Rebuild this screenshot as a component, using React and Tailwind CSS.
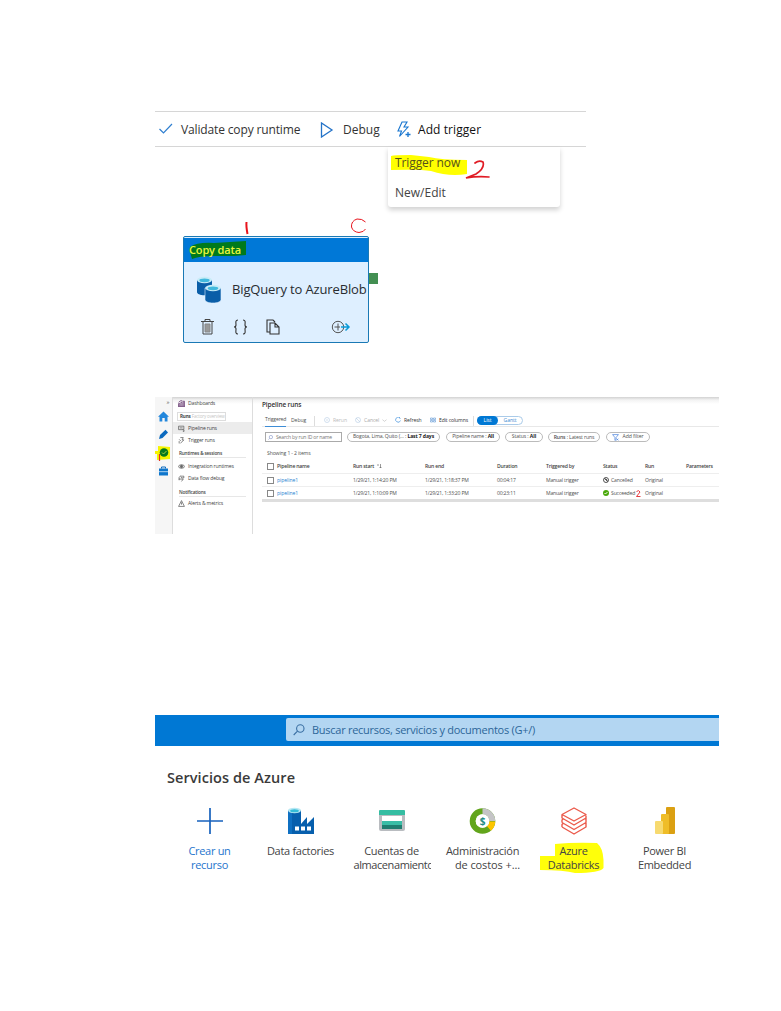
import React from "react";

const BlueCylinders = () => (
  <svg width="26" height="28" viewBox="0 0 26 28" className="shrink-0">
    <path d="M1 4v12c0 2 3 3.200 7.500 3.200S16 18 16 16V4z" fill="#0a5ea8" />
    <ellipse cx="8.500" cy="4" rx="7.500" ry="3.200" fill="#c9ecf7" />
    <ellipse cx="8.500" cy="4.300" rx="5.200" ry="1.900" fill="#41b9dd" />
    <path d="M9 12v11.500c0 2.200 3.500 3.500 8 3.500s8-1.300 8-3.500V12z" fill="#0a5ea8" stroke="#deefff" strokeWidth=".6" />
    <ellipse cx="17" cy="12" rx="7.800" ry="3.200" fill="#c9ecf7" />
    <ellipse cx="17" cy="12.300" rx="5.300" ry="1.900" fill="#41b9dd" />
  </svg>
);

function Toolbar() {
  return (
    <div className="relative flex h-[36px] w-[431px] items-center border-y border-[#d6d6d6] pt-[2px] text-[12px] text-[#333]">
      <svg width="15" height="12" viewBox="0 0 15 12" className="mb-[2px] ml-[4px]" fill="none" stroke="#2f7fd0" strokeWidth="1.200">
        <path d="M.5 6l4 4L13 1" />
      </svg>
      <span className="ml-[7px] w-[139px] whitespace-nowrap tracking-[-0.14px]">Validate copy runtime</span>
      <svg width="14" height="16" viewBox="0 0 14 16" className="mb-[1px]" fill="none" stroke="#2473c8" strokeWidth="1.300">
        <path d="M1.500 1v14L12 8z" />
      </svg>
      <span className="ml-[9px] w-[53px] whitespace-nowrap">Debug</span>
      <svg width="17" height="18" viewBox="0 0 17 18" className="mb-[1px]" fill="none" stroke="#1976cf" strokeWidth="1.100">
        <path d="M6 1h5L8 6h4l-8.500 9.500L5.500 10H2z" />
        <path d="M9.500 13.500h5M12 11v5" strokeWidth="1.300" />
      </svg>
      <span className="ml-[5px] whitespace-nowrap tracking-[0.08px] text-[#111]">Add trigger</span>
      <div className="absolute left-[233px] top-[35px] h-[60px] w-[172px] rounded-b-[3px] bg-white pl-[3px] pt-[5px] text-[#444] shadow-[0_3px_5px_rgba(0,0,0,0.18)]">
        <div className="relative h-[24px] w-[100px]">
          <svg width="78" height="24" viewBox="0 0 78 24" className="absolute left-0 top-[2px]">
            <path d="M0 2Q3 1 20 1L38 3Q50 6 76 6V20Q58 23 40 17Q28 15 0 16z" fill="#ff0" />
          </svg>
          <div className="absolute left-[4px] top-[4px] whitespace-nowrap leading-[14px] tracking-[-0.1px] text-[#55501c]">
            Trigger now
          </div>
          <svg width="26" height="22" viewBox="0 0 26 22" className="absolute left-[74px] top-[8px]" fill="none" stroke="#e01b24" strokeWidth="1.700" strokeLinecap="round">
            <path d="M10 3Q14 0 18 2Q20 8 11 14L1 18Q12 16 24 17" />
          </svg>
        </div>
        <div className="ml-[4px] mt-[8px] leading-[18px]">New/Edit</div>
      </div>
    </div>
  );
}

function ActivityCard() {
  return (
    <div className="relative ml-[28px] mt-[89px] h-[107px] w-[186px] rounded-[2px] border border-[#1a79b5] bg-[#deefff]">
      <div className="mt-[1px] flex h-[24px] items-center bg-[#0078d7]">
        <span className="relative text-[11px] font-semibold leading-[14px] text-[#e8f53c]">
          <svg width="58" height="19" viewBox="0 0 58 19" className="absolute left-[5px] top-[-3px]">
            <path d="M1 7Q8 2 25 3L57 1V15L45 16H24Q10 16 3 19L1 12z" fill="#007a1d" />
          </svg>
          <span className="relative ml-[5px] whitespace-nowrap tracking-[-0.15px]">Copy data</span>
        </span>
      </div>
      <div className="flex h-[53px] items-center overflow-hidden pl-[12px] pt-[2px]">
        <BlueCylinders />
        <span className="ml-[10px] whitespace-nowrap text-[13px] tracking-[-0.14px] text-[#282c30]">BigQuery to AzureBlob</span>
      </div>
      <div className="flex items-center pl-[17px] pr-[17px] pt-[4px]">
        <svg width="13" height="16" viewBox="0 0 13 16" fill="none" stroke="#444">
          <path d="M0 2.500h13M4 2.500V.5h5v2" />
          <path d="M2 3v12h9V3" />
          <path d="M4 5h5v8H4z" fill="#999" stroke="#888" />
        </svg>
        <svg width="15" height="16" viewBox="0 0 15 16" className="ml-[19px]" fill="none" stroke="#333" strokeWidth="1.100">
          <path d="M5 1C2 1 3 4 3 6S1.500 8 1 8c.5 0 2 0 2 2s-1 5 2 5M10 1c3 0 2 3 2 5s1.500 2 2 2c-.5 0-2 0-2 2s1 5-2 5" />
        </svg>
        <svg width="14" height="16" viewBox="0 0 14 16" className="ml-[18px]" fill="none" stroke="#333" strokeWidth="1.100">
          <path d="M4 13H1V1h6l2 2M4 4h5l4 4v7H4zM9 4v4h4" />
        </svg>
        <svg width="20" height="14" viewBox="0 0 20 14" className="ml-auto" fill="none" stroke="#555">
          <circle cx="7" cy="7" r="5.700" />
          <path d="M3.500 7H9M7 3.500v7" />
          <path d="M10 7h8M14.500 3.500L18 7l-3.500 3.500" stroke="#0a9ad8" strokeWidth="1.500" />
        </svg>
      </div>
      <div className="absolute left-[185px] top-[36px] h-[11px] w-[9px] bg-[#438f52]" />
      <svg width="130" height="20" viewBox="0 0 130 20" className="absolute left-[59px] top-[-20px]" fill="none" stroke="#e8131c">
        <path d="M3.500 5Q3 9 4.500 17" strokeWidth="2" />
        <path d="M122.500 5Q119 1.500 114 2Q108 4 108.500 10Q110 15 116 15.500Q121 15 122.500 12" />
      </svg>
    </div>
  );
}

const Stroke = ({ children, color = "#555", className = "", size = 7 }) => (
  <svg width={size} height={size} viewBox="0 0 12 12" fill="none" stroke={color} strokeWidth="1.200" className={"shrink-0 " + className}>
    {children}
  </svg>
);

function NavItem({ icon, label, active, className = "" }) {
  return (
    <div className={"flex h-[12px] items-center gap-[3px] whitespace-nowrap pl-[5px] pt-px " + (active ? "bg-[#ececec] " : "") + className}>
      {icon}
      <span>{label}</span>
    </div>
  );
}

const NavHeading = ({ children, className = "" }) => (
  <div className={"ml-[6px] mr-[6px] h-[9px] whitespace-nowrap border-b border-[#e7e7e7] text-[4.700px] font-semibold leading-[8px] tracking-[-0.18px] " + className}>{children}</div>
);

function Rail() {
  return (
    <div className="flex w-[18px] shrink-0 flex-col items-center border-r border-[#ddd] bg-[#f6f6f6]">
      <span className="ml-[9px] mt-[2px] h-[10px] text-[6px] leading-[6px] text-[#555]">»</span>
      <svg width="11" height="11" viewBox="0 0 11 11" className="mt-[2px]">
        <path d="M5.500.5L0 5.800h1.500V10.500H4.300V7h2.400v3.500h2.800V5.800H11z" fill="#2387dc" />
      </svg>
      <svg width="11" height="11" viewBox="0 0 11 11" className="mt-[7px]">
        <path d="M1 10l1-4L7.500.8 10 3.400 4.500 9z" fill="#0b6abf" />
      </svg>
      <div className="relative mt-[5px] h-[17px] w-[18px]">
        <svg width="19" height="18" viewBox="0 0 19 18" className="absolute left-0 top-0">
          <path d="M3 1l12 1v12L2 15V9H0V6h3z" fill="#f7f500" />
          <circle cx="9" cy="7.500" r="4.300" fill="#087820" />
          <path d="M7 7.500l1.500 1.500L11.500 6" fill="none" stroke="#a9d43c" />
          <path d="M4.500 9v7" stroke="#e53020" strokeWidth="1.200" />
        </svg>
      </div>
      <svg width="11" height="10" viewBox="0 0 11 10" className="mt-[4px]">
        <path d="M3.500 2.500V1h4v1.500" fill="none" stroke="#0b6abf" />
        <path d="M1 2.500h9V9.500H1z" fill="#0e76cc" />
        <path d="M1 5.700h9" stroke="#d9ecfa" strokeWidth=".8" />
      </svg>
    </div>
  );
}

function SideNav() {
  return (
    <div className="w-[80px] shrink-0 border-r border-[#ddd] text-[5.100px] tracking-[-0.16px] text-[#444]">
      <NavItem label="Dashboards" icon={<Stroke color="#775080"><path d="M1 11V6h2v5M5 11V4h2v7M9 11V2h2v9M0 11h12M1 4l4-3 3 1" strokeWidth="1.600" /></Stroke>} />
      <div className="ml-[4px] mt-[3px] flex h-[9px] w-[49px] items-center whitespace-nowrap border border-[#ddd] pl-[2px] text-[4.600px]">
        <b>Runs</b>
        <span className="ml-[1px] text-[4.500px] tracking-[-0.15px] text-[#c5c5c5]">Factory overview</span>
      </div>
      <NavItem active label="Pipeline runs" className="mt-[1px]" icon={<Stroke><path d="M1 2h9v6H1zM3 5h5M8 8l3 2-3 2" /></Stroke>} />
      <NavItem label="Trigger runs" icon={<Stroke><path d="M4 1h5L7 5h3L4 11M2 4l3 3M2 11V7" /></Stroke>} />
      <NavHeading className="mt-[3px]">Runtimes &amp; sessions</NavHeading>
      <NavItem label="Integration runtimes" className="mt-[2px]" icon={<Stroke><ellipse cx="6" cy="6" rx="5" ry="3" /><circle cx="6" cy="6" r="2" fill="#666" /></Stroke>} />
      <NavItem label="Data flow debug" icon={<Stroke><path d="M2 9V4l3-3 1 4h4V2H7M1 7h8L6 11" /></Stroke>} />
      <NavHeading className="mt-[4px]">Notifications</NavHeading>
      <NavItem label="Alerts &amp; metrics" icon={<Stroke><path d="M6 1L1 11h10zM6 4v4" /></Stroke>} />
    </div>
  );
}

const Pill = ({ className, children }) => (
  <div className={"flex h-[10px] shrink-0 items-center justify-center whitespace-pre rounded-full border border-[#bbb] " + className}>{children}</div>
);

const Box = () => <span className="mr-[3px] h-[7px] w-[7px] shrink-0 border border-[#888]" />;

const ROW = "grid grid-cols-[86px_72px_72px_49px_57px_42px_41px_34px] items-center whitespace-nowrap pl-[5px]";

function RunRow({ start, end, duration, ok, last }) {
  return (
    <div className={ROW + (last ? " h-[12px] pt-px" : " h-[13px] border-b border-[#eee] pt-px")}>
      <span className="flex items-center text-[#2b7fd1]"><Box />pipeline1</span>
      <span className="tracking-[-0.18px]">{start}</span>
      <span className="tracking-[-0.18px]">{end}</span>
      <span className="tracking-[-0.18px]">{duration}</span>
      <span className="tracking-[-0.15px]">Manual trigger</span>
      <span className="relative flex items-center gap-[2px]">
        {ok ? (
          <svg width="6" height="6" viewBox="0 0 12 12"><circle cx="6" cy="6" r="6" fill="#4aa80b" /><path d="M3 6l2 2 4-4" stroke="#fff" strokeWidth="1.800" fill="none" /></svg>
        ) : (
          <svg width="6" height="6" viewBox="0 0 12 12" fill="none" stroke="#444" strokeWidth="1.800"><circle cx="6" cy="6" r="5" /><path d="M2.500 2.500l7 7M5 3l4 4" /></svg>
        )}
        <span className="tracking-[-0.15px]">{ok ? "Succeeded" : "Cancelled"}</span>
        {ok && (
          <svg width="7" height="8" viewBox="0 0 7 8" className="absolute left-[32px] top-0" fill="none" stroke="#e53b40">
            <path d="M1.500 1.500Q4-.5 5 2L1.500 6.500H5.500" />
          </svg>
        )}
      </span>
      <span>Original</span>
    </div>
  );
}

function PipelineRuns() {
  return (
    <div className="min-w-0 flex-1 text-[5.100px] tracking-[-0.08px] text-[#505050]">
      <div className="h-[17px] pl-[9px] pt-[3px] text-[6.500px] font-semibold leading-[10px] tracking-[-0.13px] text-[#333]">Pipeline runs</div>
      <div className="ml-[9px] flex h-[13px] items-center whitespace-nowrap border-b border-[#e8e8e8] pl-[3px] pt-px">
        <span className="flex h-[12px] w-[21px] items-center border-b border-b-[#3d8dd6] tracking-[-0.15px]">Triggered</span>
        <span className="ml-[5px] w-[23px]">Debug</span>
        <span className="h-[10px] w-[10px] border-l border-[#ddd]" />
        <span className="flex w-[31px] items-center gap-[3px] text-[#bbb]"><Stroke size={6} color="#b5cde4"><circle cx="6" cy="6" r="5" /><path d="M4 6h4" /></Stroke>Rerun</span>
        <span className="flex w-[40px] items-center gap-[3px] text-[#aaa]"><Stroke size={6} color="#b5cde4"><circle cx="6" cy="6" r="5" /><path d="M2 2l8 8" /></Stroke>Cancel<Stroke size={5} color="#aaa"><path d="M1 4l5 4 5-4" /></Stroke></span>
        <span className="flex w-[35px] items-center gap-[3px] text-[#333]"><Stroke size={6} color="#2582d8"><path d="M10 2a5 5 0 1 0 1 5M8 1l3 2" /></Stroke>Refresh</span>
        <span className="flex w-[43px] items-center gap-[3px] tracking-[-0.13px] text-[#333]"><Stroke size={6} color="#5a94d4"><path d="M1 2h4v3H1zM7 2h4v3H7zM1 7h4v3H1zM7 7h4v3H7z" /></Stroke>Edit columns</span>
        <span className="h-[10px] w-[4px] shrink-0 border-l border-[#ddd]" />
        <span className="flex h-[9px] w-[46px] shrink-0 items-center rounded-full border border-[#aacbe9] text-[#3c8bd2]">
          <span className="-ml-px flex h-[9px] w-[21px] items-center justify-center rounded-full bg-[#0078d4] text-white">List</span>
          <span className="flex-1 text-center">Gantt</span>
        </span>
      </div>
      <div className="mt-[5px] flex h-[10px] items-center pl-[12px]">
        <div className="flex h-[10px] w-[77px] items-center gap-[3px] whitespace-nowrap border border-[#aaa] pl-[2px] pt-px text-[#777]">
          <Stroke size={5} color="#6a7fbb"><circle cx="7" cy="5" r="4" /><path d="M4 8l-3 3" /></Stroke>
          <span className="tracking-[-0.19px]">Search by run ID or name</span>
        </div>
        <Pill className="ml-[5px] w-[93px] tracking-[-0.12px]">Bogota, Lima, Quito (... : <b className="text-[#222]">Last 7 days</b></Pill>
        <Pill className="ml-[6px] w-[54px] tracking-[-0.14px]">Pipeline name : <b className="text-[#222]">All</b></Pill>
        <Pill className="ml-[5px] w-[38px]">Status : <b className="text-[#222]">All</b></Pill>
        <Pill className="ml-[5px] w-[52px] pt-px tracking-[-0.12px]"><span className="font-semibold">Runs</span> : Latest runs</Pill>
        <Pill className="ml-[6px] w-[44px] gap-[3px]"><Stroke size={7} color="#4a83dd"><path d="M1 1h10L7 6v4l-2 1V6zM8 8l3 3M11 8l-3 3" /></Stroke>Add filter</Pill>
      </div>
      <div className="mt-[7px] pl-[14px] leading-[8px] tracking-[-0.13px]">Showing 1 - 2 items</div>
      <div className="ml-[9px]">
        <div className={ROW + " mt-[3px] h-[14px] border-b border-[#eee] font-semibold tracking-[-0.19px] text-[#444]"}>
          <span className="flex items-center"><Box />Pipeline name</span>
          <span className="flex items-center gap-[3px]">Run start<Stroke size={6}><path d="M2 2v4M7 2v8M5 8l2 2 2-2" /></Stroke></span>
          <span>Run end</span>
          <span>Duration</span>
          <span>Triggered by</span>
          <span>Status</span>
          <span>Run</span>
          <span>Parameters</span>
        </div>
        <RunRow start="1/29/21, 1:14:20 PM" end="1/29/21, 1:18:37 PM" duration="00:04:17" />
        <RunRow ok last start="1/29/21, 1:10:09 PM" end="1/29/21, 1:33:20 PM" duration="00:23:11" />
        <div className="h-[3px] bg-[#dedede]" />
      </div>
    </div>
  );
}

const PlusIcon = () => (
  <svg width="26" height="28" viewBox="0 0 26 28"><path d="M0 14h26M13 1v26" stroke="#1762bd" strokeWidth="1.700" /></svg>
);
const FactoryIcon = () => (
  <svg width="26" height="28" viewBox="0 0 26 28">
    <path d="M0 3h13v14l6-7v7l7-7v17H0z" fill="#075fad" />
    <path d="M0 3h4v24H0z" fill="#0f70c2" />
    <ellipse cx="6.500" cy="3.500" rx="6.500" ry="2.700" fill="#b7e8f3" />
    <ellipse cx="6.500" cy="3.700" rx="4.300" ry="1.500" fill="#35bcd8" />
    <path d="M7 19.500h4v4H7zM13 19.500h4v4h-4zM19 19.500h4v4h-4z" fill="#fff" />
  </svg>
);
const StorageIcon = () => (
  <svg width="26" height="28" viewBox="0 0 26 28">
    <path d="M0 8h26v14q0 2-2 2H2q-2 0-2-2z" fill="#b9bcc0" />
    <path d="M0 8V4q0-1 1-1h24q1 0 1 1v4z" fill="#35bda2" />
    <path d="M3 9h20v5H3z" fill="#fff" />
    <path d="M3 14h20v4H3z" fill="#39bda6" />
    <path d="M3 18h20v4H3z" fill="#1f7d70" />
  </svg>
);
const CostIcon = () => (
  <svg width="28" height="28" viewBox="0 0 28 28" fill="none" strokeWidth="6">
    <circle cx="13.500" cy="14" r="9.800" stroke="#62a51c" />
    <path d="M13.500 4.200A9.800 9.800 0 0 1 23.300 14" stroke="#c4c4c6" />
    <path d="M23.300 14.500A9.800 9.800 0 0 1 20 21.500" stroke="#fdc500" />
    <circle cx="13.500" cy="14" r="6.800" fill="#fff" />
    <text x="13.500" y="17.700" textAnchor="middle" fill="#218b86" className="text-[10px] font-bold">$</text>
  </svg>
);
const DatabricksIcon = () => (
  <svg width="26" height="28" viewBox="0 0 26 28" fill="none" stroke="#eb5a4b" strokeWidth="1.400" strokeLinejoin="round">
    <path d="M1 7.500L13 1l12 6.500L13 14zM1 7.500V11l12 7 12-7V8.500M1 15.500l12 7 12-7V11M1 15.500V13l1-1M1 20l12 7 12-7v-4M1 20v-2.500l1-1" />
  </svg>
);
const PowerBiIcon = () => (
  <svg width="22" height="28" viewBox="0 0 22 28">
    <rect x="12" y="0" width="9" height="27" rx="1" fill="#dba012" />
    <rect x="7" y="7" width="8" height="20" rx="1" fill="#efbd28" />
    <rect x="1" y="14" width="8" height="13" rx="1" fill="#f7da70" />
  </svg>
);

const SERVICES = [
  { icon: PlusIcon, lines: ["Crear un", "recurso"], color: "text-[#2574cd]" },
  { icon: FactoryIcon, lines: ["Data factories"] },
  { icon: StorageIcon, lines: ["Cuentas de", "almacenamiento"], second: "pl-px text-left tracking-[-0.42px]" },
  { icon: CostIcon, lines: ["Administración", "de costos +..."], second: "pl-[10px] text-center tracking-[-0.1px]" },
  { icon: DatabricksIcon, lines: ["Azure", "Databricks"], mark: true },
  { icon: PowerBiIcon, lines: ["Power BI", "Embedded"] },
];

function AzurePortal() {
  return (
    <div className="ml-[155px] w-[564px]">
      <div className="flex h-[31px] justify-end bg-[#0078d4] pt-[3px]">
        <div className="flex h-[23px] w-[433px] items-center rounded-l-[2px] bg-[#b3d6f2] pl-[7px] text-[#2d6699]">
          <svg width="12" height="12" viewBox="0 0 12 12" fill="none" stroke="#3a6fa3" strokeWidth="1.100">
            <circle cx="7.300" cy="4.500" r="3.700" />
            <path d="M4.500 7.200L.7 11" />
          </svg>
          <span className="ml-[7px] mt-px whitespace-nowrap text-[11px] tracking-[-0.27px]">Buscar recursos, servicios y documentos (G+/)</span>
        </div>
      </div>
      <div className="ml-[12px] mt-[21px] h-[22px] text-[14.500px] font-semibold leading-[22px] tracking-[0.07px] text-[#3a3a3a]">Servicios de Azure</div>
      <div className="mt-[18px] flex pl-[9px]">
        {SERVICES.map(({ icon: Icon, lines, color, second, mark }) => (
          <div key={lines[0]} className="flex w-[91px] flex-col items-center">
            <Icon />
            <div className={"relative mt-[9px] w-[78px] text-[11px] leading-[14px] tracking-[-0.3px] " + (color || "text-[#444]")}>
              {mark && (
                <svg width="66" height="32" viewBox="0 0 66 32" className="absolute left-[5px] top-[-2px]">
                  <path d="M15 2Q35 0 57 1Q63 6 63.500 18V26Q60 31 35 31Q24 28 0 28V14H15z" fill="#ffff0a" />
                </svg>
              )}
              {lines.map((line, i) => (
                <div key={line} className={"relative overflow-hidden whitespace-nowrap " + (i && second ? second : "text-center")}>{line}</div>
              ))}
            </div>
          </div>
        ))}
      </div>
    </div>
  );
}

export default function App() {
  return (
    <div className="h-[1011px] w-[781px] overflow-hidden bg-white font-['Open_Sans','Noto_Sans',sans-serif]">
      <div className="ml-[155px] box-content h-[286px] pt-[111px]">
        <Toolbar />
        <ActivityCard />
      </div>
      <div className="ml-[155px] flex h-[137px] w-[564px] bg-[linear-gradient(#d2d2d2_0px,#f3f3f3_3px,#fff_7px)]">
        <Rail />
        <SideNav />
        <PipelineRuns />
      </div>
      <div className="h-[181px]" />
      <AzurePortal />
    </div>
  );
}
